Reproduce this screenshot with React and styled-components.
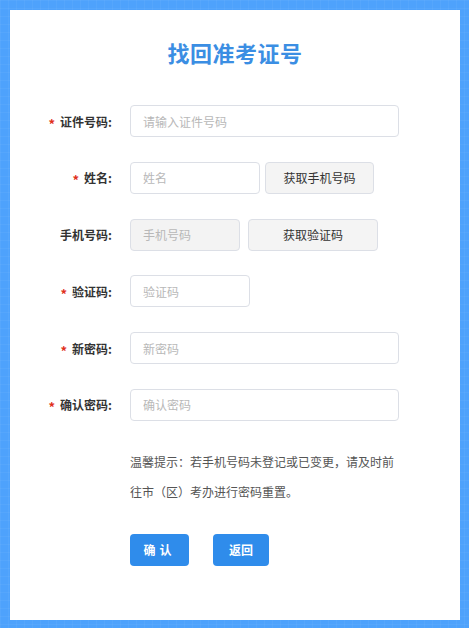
import React from 'react';
import styled, { createGlobalStyle } from 'styled-components';

const Global = createGlobalStyle`
  html, body {
    margin: 0;
    padding: 0;
    background: #4ea2fc;
    font-family: "Microsoft YaHei", "Noto Sans CJK SC", sans-serif;
  }
  * { box-sizing: border-box; }
`;

const Page = styled.div`
  min-height: 628px;
  padding: 10px 9px 8px 10px;
  background-color: #4ea2fc;
  background-image:
    linear-gradient(rgba(255,255,255,0.04) 1px, transparent 1px),
    linear-gradient(90deg, rgba(255,255,255,0.04) 1px, transparent 1px);
  background-size: 8px 8px;
`;

const Card = styled.div`
  width: 450px;
  height: 610px;
  background: #fff;
  padding-top: 27px;
`;

const Title = styled.h1`
  margin: 0 0 38px;
  text-align: center;
  font-size: 22px;
  line-height: 30px;
  font-weight: bold;
  color: #3b8ee3;
  letter-spacing: 0.5px;
`;

const Form = styled.div`
  display: flex;
  flex-direction: column;
  gap: 24.8px;
`;

const Row = styled.div`
  display: flex;
  align-items: center;
  height: 32px;
`;

const Label = styled.label`
  width: 102px;
  margin-right: 18px;
  text-align: right;
  font-size: 12px;
  font-weight: bold;
  color: #333;
  white-space: nowrap;
`;

const Star = styled.span`
  color: #e0301e;
  margin-right: 5px;
  font-size: 13px;
  position: relative;
  top: 2px;
`;

const Input = styled.input`
  width: ${p => p.$w}px;
  height: 32px;
  padding: 0 12px;
  border: 1px solid #dcdfe6;
  border-radius: 4px;
  font-size: 12px;
  font-family: inherit;
  color: #333;
  background: ${p => (p.disabled ? '#f3f3f3' : '#fff')};
  outline: none;
  &::placeholder { color: #b8b8b8; }
`;

const GrayButton = styled.button`
  width: ${p => p.$w}px;
  height: 32px;
  margin-left: ${p => p.$gap}px;
  border: 1px solid #dcdfe6;
  border-radius: 4px;
  background: #f4f4f4;
  color: #333;
  font-size: 12px;
  font-family: inherit;
  cursor: pointer;
`;

const Hint = styled.p`
  margin: 26px 0 0 120px;
  width: 268px;
  font-size: 12px;
  line-height: 30px;
  color: #555;
`;

const Actions = styled.div`
  display: flex;
  gap: 24px;
  margin: 27px 0 0 120px;
`;

const PrimaryButton = styled.button`
  width: ${p => p.$w}px;
  height: 32px;
  border: none;
  border-radius: 4px;
  background: #2f8ceb;
  color: #fff;
  font-size: 12px;
  font-weight: bold;
  font-family: inherit;
  letter-spacing: ${p => p.$spacing || 0}px;
  cursor: pointer;
`;

const Field = ({ label, required, children }) => (
  <Row>
    <Label>
      {required && <Star>*</Star>}
      {label}:
    </Label>
    {children}
  </Row>
);

export default function App() {
  return (
    <>
      <Global />
      <Page>
        <Card>
          <Title>找回准考证号</Title>
          <Form>
            <Field label="证件号码" required>
              <Input $w={269} placeholder="请输入证件号码" />
            </Field>
            <Field label="姓名" required>
              <Input $w={130} placeholder="姓名" />
              <GrayButton $w={109} $gap={5}>获取手机号码</GrayButton>
            </Field>
            <Field label="手机号码">
              <Input $w={110} placeholder="手机号码" disabled />
              <GrayButton $w={130} $gap={8}>获取验证码</GrayButton>
            </Field>
            <Field label="验证码" required>
              <Input $w={120} placeholder="验证码" />
            </Field>
            <Field label="新密码" required>
              <Input $w={269} type="password" placeholder="新密码" />
            </Field>
            <Field label="确认密码" required>
              <Input $w={269} type="password" placeholder="确认密码" />
            </Field>
          </Form>
          <Hint>温馨提示：若手机号码未登记或已变更，请及时前往市（区）考办进行密码重置。</Hint>
          <Actions>
            <PrimaryButton $w={59} $spacing={4}>确认</PrimaryButton>
            <PrimaryButton $w={56}>返回</PrimaryButton>
          </Actions>
        </Card>
      </Page>
    </>
  );
}
